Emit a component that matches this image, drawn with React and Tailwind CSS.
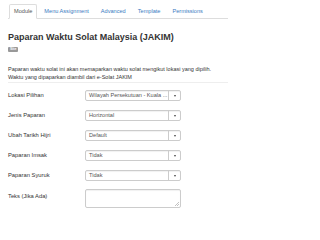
import React from "react";

const tabs = ["Module", "Menu Assignment", "Advanced", "Template", "Permissions"];

const fields = [
  { label: "Lokasi Pilihan", value: "Wilayah Persekutuan - Kuala ..." },
  { label: "Jenis Paparan", value: "Horizontal" },
  { label: "Ubah Tarikh Hijri", value: "Default" },
  { label: "Paparan Imsak", value: "Tidak" },
  { label: "Paparan Syuruk", value: "Tidak" },
];

const Select = ({ value }) => (
  <div className="flex w-[96px] h-[11px] border border-[#ccc] rounded-[2px] bg-white shadow-[inset_0_1px_1px_rgba(0,0,0,0.06)]">
    <div className="flex-1 pl-[3px] text-[5.6px] leading-[9px] text-[#555] whitespace-nowrap overflow-hidden">{value}</div>
    <div className="w-[12px] border-l border-[#ccc] flex items-center justify-center">
      <span className="block w-0 h-0 border-l-[1.5px] border-r-[1.5px] border-t-[2px] border-l-transparent border-r-transparent border-t-[#444]" />
    </div>
  </div>
);

const App = () => {
  return (
    <div className="w-[234px] h-[215px] overflow-hidden bg-white px-[8px] pt-[4px] font-['Liberation_Sans',Arial,sans-serif] text-[#333]">
      <ul className="flex w-[220px] border-b border-[#ddd] h-[15px]">
        {tabs.map((tab, i) => (
          <li
            key={tab}
            className={
              i === 0
                ? "ml-[1px] mr-[2px] px-[4px] h-[15px] leading-[13px] text-[5.6px] text-[#555] border border-[#ddd] border-b-white rounded-t-[2px] bg-white"
                : "mr-[2px] px-[5px] h-[14px] leading-[15px] text-[5.6px] text-[#3a7bbf]"
            }
          >
            {tab}
          </li>
        ))}
      </ul>

      <h1 className="mt-[13px] text-[9px] leading-[11px] font-bold text-[#333]">
        Paparan Waktu Solat Malaysia (JAKIM)
      </h1>
      <div className="mt-[4px] flex">
        <span className="bg-[#999] text-white text-[3.5px] leading-[5px] font-bold rounded-[1px] px-[2px]">Site</span>
      </div>

      <p className="mt-[14px] text-[5.5px] leading-[7.5px] text-[#333]">
        Paparan waktu solat ini akan memaparkan waktu solat mengikut lokasi yang dipilih.
        <br />
        Waktu yang dipaparkan diambil dari e-Solat JAKIM
      </p>

      <hr className="mt-[1px] w-[220px] border-t border-[#eee]" />

      <div className="mt-[7px] flex flex-col gap-[9px]">
        {fields.map((f) => (
          <div key={f.label} className="flex items-center">
            <label className="w-[77px] text-[5.8px] text-[#333]">{f.label}</label>
            <Select value={f.value} />
          </div>
        ))}
        <div className="flex items-start -mt-[1px]">
          <label className="w-[77px] pt-[3px] text-[5.8px] text-[#333]">Teks (Jika Ada)</label>
          <div className="relative w-[96px] h-[19px] border border-[#ccc] rounded-[2px] bg-white shadow-[inset_0_1px_1px_rgba(0,0,0,0.06)]">
            <svg className="absolute right-[1px] bottom-[1px]" width="4" height="4" viewBox="0 0 4 4">
              <path d="M4 0L0 4M4 2L2 4" stroke="#999" strokeWidth="0.6" />
            </svg>
          </div>
        </div>
      </div>
    </div>
  );
};

export default App;
